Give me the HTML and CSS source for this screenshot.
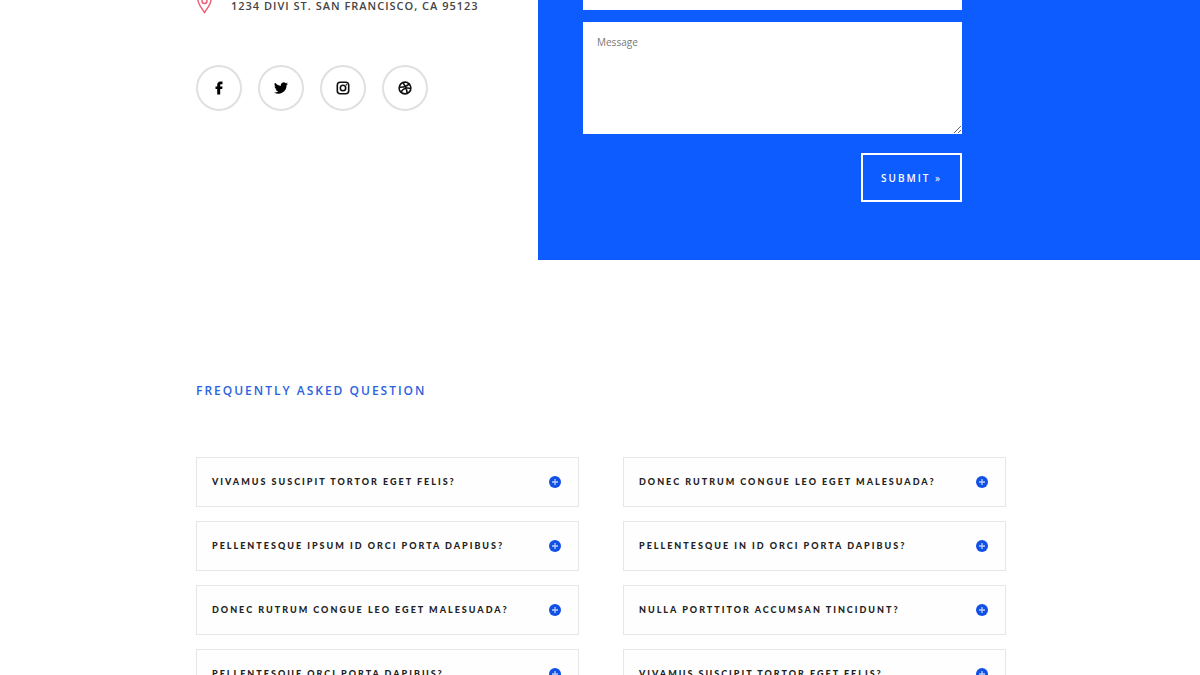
FILE: index.html
```html
<!DOCTYPE html>
<html lang="en">
<head>
<meta charset="utf-8">
<title>Contact</title>
<link rel="stylesheet" href="styles.css">
</head>
<body>
<main class="page">
  <section class="contact">
    <div class="info">
      <address class="address">
        <svg class="pin" viewBox="0 0 16 22" aria-hidden="true"><path d="M8 20.5C5 16 1.500 12 1.500 8a6.500 6.500 0 0 1 13 0C14.500 12 11 16 8 20.500Z"/><circle cx="8" cy="9" r="2.500"/></svg>
        <span>1234 Divi St. San Francisco, CA 95123</span>
      </address>
      <nav class="social">
        <a class="social-link" href="#" aria-label="Facebook"><svg viewBox="0 0 14 14"><path d="M5.200 13.500V8H3.500V5.400h1.700V4C5.200 1.800 6.400.6 8.500.6h2v2.700H9.300c-.9 0-1.100.4-1.100 1.100v1h2.300L10.200 8h-2v5.500Z"/></svg></a>
        <a class="social-link" href="#" aria-label="Twitter"><svg viewBox="0 0 24 24"><path d="M24 4.600a10 10 0 0 1-2.800.8 5 5 0 0 0 2.100-2.700 10 10 0 0 1-3.100 1.200 4.900 4.900 0 0 0-8.400 4.500A14 14 0 0 1 1.700 3.200a4.900 4.900 0 0 0 1.500 6.500 4.900 4.900 0 0 1-2.200-.6 4.900 4.900 0 0 0 3.900 4.900 5 5 0 0 1-2.200.1 4.900 4.900 0 0 0 4.600 3.400A9.900 9.900 0 0 1 0 19.500a14 14 0 0 0 21.500-12.400A10 10 0 0 0 24 4.600Z"/></svg></a>
        <a class="social-link" href="#" aria-label="Instagram"><svg class="line" viewBox="0 0 14 14"><rect x="1.300" y="1.300" width="11.400" height="11.400" rx="3"/><circle cx="7" cy="7" r="2.700"/><circle class="dot" cx="10.300" cy="3.700" r=".7"/></svg></a>
        <a class="social-link" href="#" aria-label="Dribbble"><svg class="line" viewBox="0 0 14 14"><circle cx="7" cy="7" r="5.900"/><path d="M4.700 1.500C7 4.200 8.700 8 9.300 12.400M1.200 6.200c4 .2 7.800-.6 10-3.400M2.900 11.300C4.800 7.700 8.500 6.300 12.900 7.500"/></svg></a>
      </nav>
    </div>
    <div class="panel">
      <form class="form">
        <input class="field" type="email" aria-label="Email Address">
        <textarea class="field message" aria-label="Message" placeholder="Message"></textarea>
        <button class="submit" type="button">Submit <span class="arrow">»</span></button>
      </form>
    </div>
  </section>

  <section class="faq">
    <h2 class="faq-title">Frequently Asked Question</h2>
    <div class="faq-grid">
      <details class="item"><summary>Vivamus suscipit tortor eget felis?<svg class="plus" viewBox="0 0 12 12"><circle cx="6" cy="6" r="6"/><path d="M6 3v6M3 6h6"/></svg></summary></details>
      <details class="item"><summary>Donec rutrum congue leo eget malesuada?<svg class="plus" viewBox="0 0 12 12"><circle cx="6" cy="6" r="6"/><path d="M6 3v6M3 6h6"/></svg></summary></details>
      <details class="item"><summary>Pellentesque ipsum id orci porta dapibus?<svg class="plus" viewBox="0 0 12 12"><circle cx="6" cy="6" r="6"/><path d="M6 3v6M3 6h6"/></svg></summary></details>
      <details class="item"><summary>Pellentesque in id orci porta dapibus?<svg class="plus" viewBox="0 0 12 12"><circle cx="6" cy="6" r="6"/><path d="M6 3v6M3 6h6"/></svg></summary></details>
      <details class="item"><summary>Donec rutrum congue leo eget malesuada?<svg class="plus" viewBox="0 0 12 12"><circle cx="6" cy="6" r="6"/><path d="M6 3v6M3 6h6"/></svg></summary></details>
      <details class="item"><summary>Nulla porttitor accumsan tincidunt?<svg class="plus" viewBox="0 0 12 12"><circle cx="6" cy="6" r="6"/><path d="M6 3v6M3 6h6"/></svg></summary></details>
      <details class="item"><summary>Pellentesque orci porta dapibus?<svg class="plus" viewBox="0 0 12 12"><circle cx="6" cy="6" r="6"/><path d="M6 3v6M3 6h6"/></svg></summary></details>
      <details class="item"><summary>Vivamus suscipit tortor eget felis?<svg class="plus" viewBox="0 0 12 12"><circle cx="6" cy="6" r="6"/><path d="M6 3v6M3 6h6"/></svg></summary></details>
    </div>
  </section>
</main>
</body>
</html>
```
FILE: styles.css
```css
* { box-sizing: border-box; }

body {
  margin: 0;
  background: #fff;
  color: #444;
  font-family: "Open Sans", "Noto Sans", sans-serif;
  overflow: hidden;
}

.page { height: 100vh; overflow: hidden; }

.contact {
  display: grid;
  grid-template-columns: 342px 1fr;
  padding-left: 196px;
}

.address {
  display: flex;
  align-items: center;
  gap: 18px;
  height: 22px;
  margin-top: -8px;
  font-size: 11px;
  font-style: normal;
  font-weight: 600;
  line-height: 16px;
  letter-spacing: 1px;
  text-transform: uppercase;
  white-space: nowrap;
}

.address span { padding-top: 6px; }

.pin {
  width: 17px;
  height: 22px;
  fill: none;
  stroke: #ee5a72;
  stroke-width: 1.4;
}

.social {
  display: flex;
  gap: 16px;
  margin-top: 51px;
}

.social-link {
  display: flex;
  align-items: center;
  justify-content: center;
  width: 46px;
  height: 46px;
  border: 2px solid #e0e0e0;
  border-radius: 50%;
}

.social-link svg { width: 14px; height: 14px; fill: #000; }

.social-link .line { fill: none; stroke: #111; stroke-width: 1.6; }

.social-link .dot { fill: #111; stroke: none; }

.panel {
  padding: 0 45px 58px;
  background: #0c5cff;
}

.form {
  display: flex;
  flex-direction: column;
  max-width: 379px;
  margin-top: -30px;
}

.field {
  width: 100%;
  height: 40px;
  padding: 13px 14px;
  border: 0;
  border-radius: 0;
  background: #fff;
  font: 10px/15px "Open Sans", "Noto Sans", sans-serif;
}

.field::placeholder { color: #777; }

.message { height: 112px; margin-top: 12px; }

.submit {
  align-self: flex-end;
  height: 49px;
  margin-top: 19px;
  padding: 0 18px;
  border: 2px solid #fff;
  background: transparent;
  color: #fff;
  font: 600 10px/16px "Open Sans", "Noto Sans", sans-serif;
  letter-spacing: 2px;
  text-transform: uppercase;
}

.arrow { font-weight: 400; }

.faq { padding: 121px 194px 0 196px; }

.faq-title {
  margin: 0 0 56px;
  color: #2b62e0;
  font-size: 12px;
  font-weight: 600;
  line-height: 20px;
  letter-spacing: 2px;
  text-transform: uppercase;
}

.faq-grid {
  display: grid;
  grid-template-columns: 1fr 1fr;
  gap: 14px 44px;
}

.item { border: 1px solid #e6e6e6; background: #fefefe; }

.item summary {
  display: flex;
  align-items: center;
  justify-content: space-between;
  height: 48px;
  padding: 0 17px 0 15px;
  color: #222;
  font: 900 9px/14px Lato, sans-serif;
  letter-spacing: 2px;
  text-transform: uppercase;
  list-style: none;
}

.plus { width: 12px; height: 12px; fill: #1150e4; }

.plus path { stroke: #b9d0ff; stroke-width: 1.3; }
```
